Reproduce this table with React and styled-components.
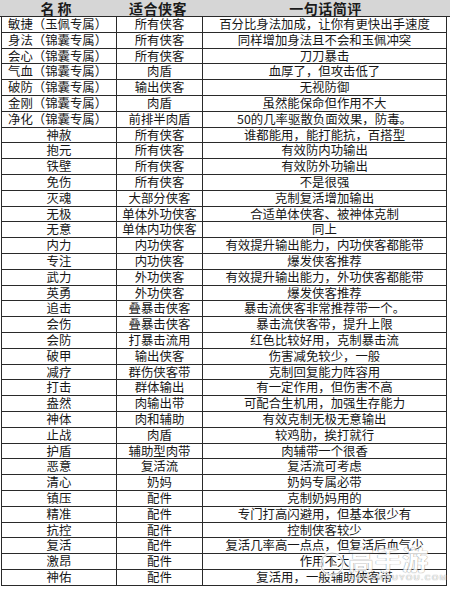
import React from "react";
import styled, { createGlobalStyle } from "styled-components";

const GlobalStyle = createGlobalStyle`
  body {
    margin: 0;
    background: #ffffff;
    font-family: "Noto Sans CJK SC", "Noto Sans", sans-serif;
  }
`;

const Page = styled.div`
  position: relative;
  width: 450px;
  height: 590px;
  overflow: hidden;
  background: #ffffff;
`;

const Header = styled.div`
  display: grid;
  grid-template-columns: 115px 86px 249px;
  height: 17px;
  box-sizing: border-box;
  background: #d6d6d6;
  border-bottom: 1px solid #2a2a2a;
`;

const HeadCell = styled.div`
  text-align: center;
  font-size: 14px;
  font-weight: 700;
  line-height: 16px;
  color: #1a1a1a;
  letter-spacing: ${(p) => (p.$wide ? "3px" : "0.5px")};
`;

const Body = styled.div`
  width: 446px;
  margin-left: 1px;
  border-left: 1px solid #2a2a2a;
  border-right: 1px solid #2a2a2a;
  box-sizing: border-box;
`;

const Row = styled.div`
  display: grid;
  grid-template-columns: 114px 86px 1fr;
  height: 15.8px;
  box-sizing: border-box;
  border-bottom: 1px solid #2a2a2a;
`;

const Cell = styled.div`
  font-size: 12.4px;
  line-height: 14.8px;
  color: #161616;
  white-space: nowrap;
  text-align: ${(p) => (p.$left ? "left" : "center")};
  padding-left: ${(p) => (p.$left ? "6px" : "0")};
  border-left: ${(p) => (p.$first ? "none" : "1px solid #2a2a2a")};
`;

const Watermark = styled.div`
  position: absolute;
  right: 2px;
  bottom: 8px;
  display: flex;
  align-items: center;
  gap: 3px;
  opacity: 0.8;
  pointer-events: none;
`;

const MarkText = styled.div`
  display: flex;
  flex-direction: column;
  align-items: flex-start;
  color: #ffffff;
  text-shadow: 0 0 1px #8a8a8a, 0 0 1px #8a8a8a;
`;

const MarkTitle = styled.span`
  font-size: 26px;
  font-weight: 700;
  line-height: 28px;
  letter-spacing: 1px;
`;

const MarkSub = styled.span`
  font-family: "Liberation Sans", sans-serif;
  font-size: 8px;
  line-height: 9px;
  letter-spacing: 1.5px;
`;

const rows = [
  ["敏捷（玉佩专属）", "所有侠客", "百分比身法加成，让你有更快出手速度"],
  ["身法（锦囊专属）", "所有侠客", "同样增加身法且不会和玉佩冲突"],
  ["会心（锦囊专属）", "所有侠客", "刀刀暴击"],
  ["气血（锦囊专属）", "肉盾", "血厚了，但攻击低了"],
  ["破防（锦囊专属）", "输出侠客", "无视防御"],
  ["金刚（锦囊专属）", "肉盾", "虽然能保命但作用不大"],
  ["净化（锦囊专属）", "前排半肉盾", "50的几率驱散负面效果，防毒。"],
  ["神赦", "所有侠客", "谁都能用，能打能抗，百搭型"],
  ["抱元", "所有侠客", "有效防内功输出"],
  ["铁壁", "所有侠客", "有效防外功输出"],
  ["免伤", "所有侠客", "不是很强"],
  ["灭魂", "大部分侠客", "克制复活增加输出"],
  ["无极", "单体外功侠客", "合适单体侠客、被神体克制"],
  ["无意", "单体内功侠客", "同上"],
  ["内力", "内功侠客", "有效提升输出能力，内功侠客都能带"],
  ["专注", "内功侠客", "爆发侠客推荐"],
  ["武力", "外功侠客", "有效提升输出能力，外功侠客都能带"],
  ["英勇", "外功侠客", "爆发侠客推荐"],
  ["追击", "叠暴击侠客", "暴击流侠客非常推荐带一个。"],
  ["会伤", "叠暴击侠客", "暴击流侠客带，提升上限"],
  ["会防", "打暴击流用", "红色比较好用，克制暴击流"],
  ["破甲", "输出侠客", "伤害减免较少，一般"],
  ["减疗", "群伤侠客带", "克制回复能力阵容用"],
  ["打击", "群体输出", "有一定作用，但伤害不高"],
  ["盎然", "肉输出带", "可配合生机用，加强生存能力"],
  ["神体", "肉和辅助", "有效克制无极无意输出"],
  ["止战", "肉盾", "较鸡肋，挨打就行"],
  ["护盾", "辅助型肉带", "肉辅带一个很香"],
  ["恶意", "复活流", "复活流可考虑"],
  ["清心", "奶妈", "奶妈专属必带"],
  ["镇压", "配件", "克制奶妈用的"],
  ["精准", "配件", "专门打高闪避用，但基本很少有"],
  ["抗控", "配件", "控制侠客较少"],
  ["复活", "配件", "复活几率高一点点，但复活后血气少"],
  ["激昂", "配件", "作用不大"],
  ["神佑", "配件", "复活用，一般辅助侠客带"],
];

const LogoMark = () => (
  <svg width="26" height="30" viewBox="0 0 26 30">
    <circle cx="13" cy="15" r="11" fill="none" stroke="#ffffff" strokeWidth="3" />
    <circle cx="13" cy="15" r="11" fill="none" stroke="#9a9a9a" strokeWidth="0.6" />
    <path d="M13 9 L13 16 L18 16" fill="none" stroke="#8a8a8a" strokeWidth="1.6" />
  </svg>
);

const App = () => {
  return (
    <Page>
      <GlobalStyle />
      <Header>
        <HeadCell $wide>名称</HeadCell>
        <HeadCell>适合侠客</HeadCell>
        <HeadCell>一句话简评</HeadCell>
      </Header>
      <Body>
        {rows.map(([name, fit, note]) => (
          <Row key={name}>
            <Cell $first $left={name.includes("（")}>
              {name}
            </Cell>
            <Cell>{fit}</Cell>
            <Cell>{note}</Cell>
          </Row>
        ))}
      </Body>
      <Watermark>
        <LogoMark />
        <MarkText>
          <MarkTitle>高手游</MarkTitle>
          <MarkSub>GAOSHOUYOU.COM</MarkSub>
        </MarkText>
      </Watermark>
    </Page>
  );
};

export default App;
